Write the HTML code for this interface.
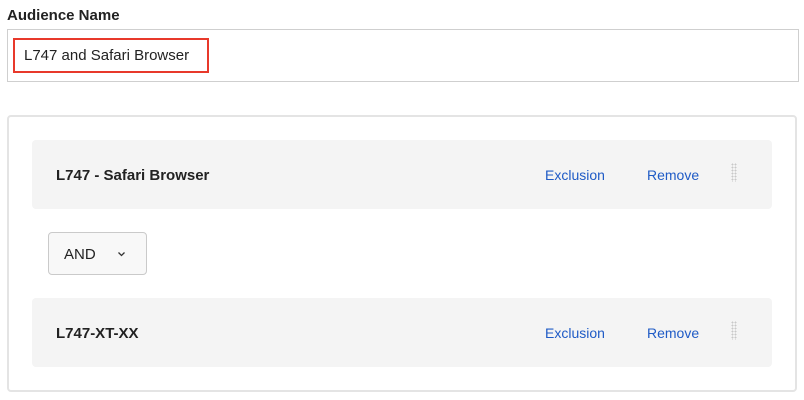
<!DOCTYPE html>
<html><head><style>
body{margin:0;width:804px;height:400px;background:#fff;font-family:"Liberation Sans",sans-serif;color:#2c2c2c;position:relative;overflow:hidden}
.a{position:absolute}
.lbl{left:7px;top:7px;font-size:15px;font-weight:bold;color:#222}
.inp{left:7px;top:29px;width:790px;height:51px;border:1px solid #cfcfcf}
.red{left:13px;top:38px;width:192px;height:31px;border:2px solid #e8392b}
.red span{position:absolute;left:9px;top:7px;font-size:15px;color:#222}
.card{left:7px;top:115px;width:786px;height:273px;border:2px solid #e4e4e4;border-radius:4px}
.row{left:32px;width:740px;height:69px;background:#f4f4f4;border-radius:4px}
.row b{position:absolute;left:24px;top:27px;font-size:15px;color:#222}
.lk{position:absolute;top:27px;font-size:14px;color:#1f5bc6}
.dr{position:absolute;left:699px;top:23px;width:6px;height:19px;background-image:radial-gradient(circle,#c8c8c8 0.8px,transparent 1px);background-size:3px 3px}
.dd{left:48px;top:232px;width:97px;height:41px;border:1px solid #cacaca;border-radius:4px;background:#f8f8f8}
.dd span{position:absolute;left:15px;top:13px;font-size:15px;color:#222}
</style></head><body>
<div class="a lbl">Audience Name</div>
<div class="a inp"></div>
<div class="a red"><span>L747 and Safari Browser</span></div>
<div class="a card"></div>
<div class="a row" style="top:140px"><b>L747 - Safari Browser</b><span class="lk" style="left:513px">Exclusion</span><span class="lk" style="left:615px">Remove</span><div class="dr"></div></div>
<div class="a dd"><span>AND</span><svg style="position:absolute;left:68px;top:18px" width="9" height="6" viewBox="0 0 9 6"><path d="M1.5 1.5 L4.5 4.5 L7.5 1.5" fill="none" stroke="#333" stroke-width="1.3"/></svg></div>
<div class="a row" style="top:298px"><b>L747-XT-XX</b><span class="lk" style="left:513px">Exclusion</span><span class="lk" style="left:615px">Remove</span><div class="dr"></div></div>
</body></html>
